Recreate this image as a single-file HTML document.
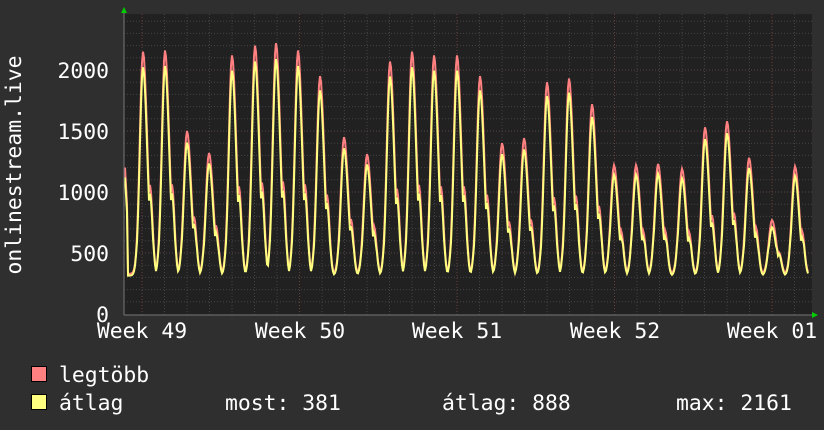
<!DOCTYPE html>
<html><head><meta charset="utf-8"><style>
html,body{margin:0;padding:0;background:#2f2f2f;width:824px;height:430px;overflow:hidden}
svg{display:block}
text{font-family:"DejaVu Sans Mono","Liberation Mono",monospace;fill:#fff;font-size:21.4px}
</style></head><body>
<svg id="g" width="824" height="430" xmlns="http://www.w3.org/2000/svg">
<rect x="0" y="0" width="824" height="430" fill="#2f2f2f"/>
<rect x="124" y="14" width="688" height="301" fill="#212121"/>
<g id="grid"></g>
<path id="mx" fill="none" stroke="#ff8080" stroke-width="2"/>
<path id="av" fill="none" stroke="#ffff80" stroke-width="2"/>
<line x1="124" y1="315" x2="814" y2="315" stroke="#777" stroke-width="1"/>
<line x1="124" y1="12" x2="124" y2="315" stroke="#777" stroke-width="1"/>
<polygon points="121,13 127,13 124,7" fill="#00cc00"/>
<polygon points="812,312 812,318 818,315" fill="#00cc00"/>
<g text-anchor="end">
<text x="109" y="322">0</text>
<text x="109" y="261">500</text>
<text x="109" y="200">1000</text>
<text x="109" y="139">1500</text>
<text x="109" y="78">2000</text>
</g>
<g text-anchor="middle">
<text x="142" y="338">Week 49</text>
<text x="300" y="338">Week 50</text>
<text x="457" y="338">Week 51</text>
<text x="615" y="338">Week 52</text>
<text x="772" y="338">Week 01</text>
</g>
<text transform="translate(21,165) rotate(-90)" text-anchor="middle">onlinestream.live</text>
<rect x="31.5" y="366.5" width="15" height="15" fill="#ff8080" stroke="#000"/>
<rect x="31.5" y="394.5" width="15" height="15" fill="#ffff80" stroke="#000"/>
<text x="59" y="382">legtöbb</text>
<text x="59" y="410">átlag</text>
<text x="225" y="410">most: 381</text>
<text x="442" y="410">átlag: 888</text>
<text x="676" y="410">max: 2161</text>
</svg>
<script>
var g=document.getElementById("grid"),s="";
function Y(v){return 314-v*0.122;}
for(var v=100;v<2500;v+=100){var y=Y(v);if(y<14)break;s+='<line x1="124" x2="812" y1="'+y+'" y2="'+y+'" stroke="'+(v%500==0?'#5a4545':'#444')+'" stroke-dasharray="1,2"/>';}
for(var x=142-22.5;x<812;x+=22.5){if(x<125)continue;var maj=Math.abs(((x-142)/157.5)-Math.round((x-142)/157.5))<0.01;s+='<line y1="14" y2="315" x1="'+x+'" x2="'+x+'" stroke="'+(maj?'#6a4040':'#444')+'" stroke-dasharray="1,2"/>';}
g.innerHTML=s;
var pk=[[143,2150],[165,2160],[187,1500],[209,1320],[232,2120],[255,2200],[276,2220],[298,2160],[320,1950],[344,1450],[367,1310],[390,2070],[412,2150],[434,2120],[457,2120],[480,1950],[502,1400],[524,1440],[547,1900],[569,1930],[592,1720],[614,1220],[636,1220],[658,1230],[682,1190],[705,1530],[727,1580],[749,1280],[772,770],[795,1210]];
function val(x){var best=0;for(var i=0;i<pk.length;i++){var d=(x-pk[i][0]);var w=d<0?3.2:4.2;var h=pk[i][1]-330;var f=Math.exp(-d*d/(2*w*w));if(d>0&&d<15)f=Math.max(f,0.4*Math.exp(-(d-7)*(d-7)/12));best=Math.max(best,h*f);}return 330+best;}
var a="",b="";
for(var x=125;x<=808;x+=1){var v=val(x);if(x<128)v=1200-(x-125)*150;a+=(a?"L":"M")+x+","+Y(v).toFixed(1);var w2=v>600?v*0.95-20:v-15;b+=(b?"L":"M")+x+","+Y(w2).toFixed(1);}
document.getElementById("mx").setAttribute("d",a);
document.getElementById("av").setAttribute("d",b);
</script>
</body></html>
